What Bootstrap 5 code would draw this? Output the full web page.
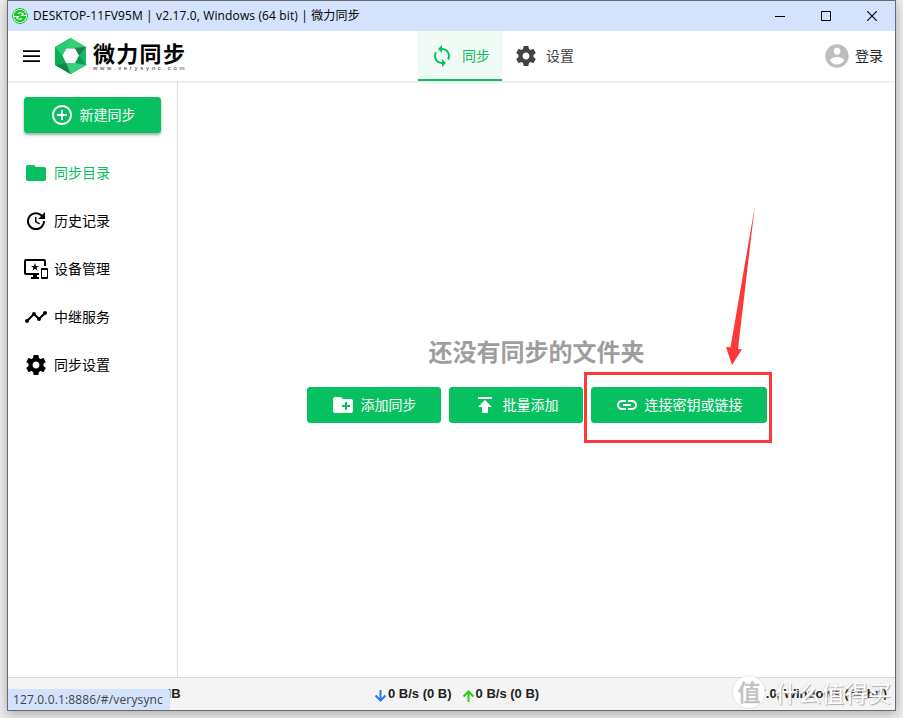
<!DOCTYPE html>
<html lang="zh-CN">
<head>
<meta charset="utf-8">
<meta name="viewport" content="width=device-width, initial-scale=1">
<title>微力同步</title>
<link href="https://cdn.jsdelivr.net/npm/bootstrap@5.3.0/dist/css/bootstrap.min.css" rel="stylesheet">
<style>
:root{--green:#07c160;--red:#fd3838}
body{width:903px;height:718px;overflow:hidden;background:#ececec;font-family:"Noto Sans","Noto Sans CJK SC",sans-serif;font-size:14px;line-height:20px;color:#000}
svg{display:block;flex:none;fill:currentColor}
.win{width:889px;height:711px;margin-left:7px;border:1px solid #696a70;background:#fff;box-shadow:0 3px 10px rgba(0,0,0,.28)}
.titlebar{height:30px;background:#d3e2fd;padding-left:4px;font-family:"Open Sans","Noto Sans CJK SC",sans-serif;font-size:12px}
.caption-text{margin-left:5px;white-space:nowrap;letter-spacing:.13px}
.win-ctl{width:46px;height:30px}
.topbar{height:50px;box-shadow:0 1px 2px rgba(0,0,0,.12);z-index:1}
.brand{width:410px}
.brand-mark{margin-left:3px;margin-right:7px}
.brand-name{font-family:"Noto Sans CJK SC",sans-serif;font-weight:700;font-size:22px;line-height:24px;height:24px;white-space:nowrap;letter-spacing:1.300px}
.brand-url{font-family:"Liberation Sans",sans-serif;font-size:6px;line-height:7px;letter-spacing:2.700px;color:#333;white-space:nowrap;margin-top:1px}
.tab-item{height:50px;width:84px;padding-left:12px;gap:8px;color:#424242}
.tab-item.active{color:var(--green);background:#f1fbf6;box-shadow:inset 0 -2px var(--green)}
.account{gap:4px;padding-right:12px}
.side{width:170px;border-right:1px solid #dfdfdf;padding:16px 16px 0}
.btn-sync{--bs-btn-bg:var(--green);--bs-btn-color:#fff;--bs-btn-border-color:var(--green);--bs-btn-hover-bg:#06ad56;--bs-btn-hover-color:#fff;--bs-btn-border-radius:3px;--bs-btn-font-size:14px;--bs-btn-line-height:20px;width:134px;height:36px;gap:6px;white-space:nowrap}
.btn-wide{width:176px}
.raised{box-shadow:0 2px 3px rgba(0,0,0,.35)}
.side-link{height:48px;gap:6px;color:#000}
.side-link.active{color:var(--green)}
.empty-title{font-family:"Noto Sans CJK SC",sans-serif;font-size:24px;line-height:32px;font-weight:700;color:#9e9e9e;margin-top:254px}
.actions{padding-top:20px}
.foot{height:33px;border-top:1px solid #d9d9d9;background:#f4f4f4;font-family:"Liberation Sans",sans-serif;font-size:13px;font-weight:700;line-height:16px;color:#222;padding:0 8px 0 9px}
.foot>div{white-space:nowrap}
.load{width:356px;letter-spacing:.15px}
.gap-up{margin-left:9px}
.url-tip{left:8px;top:689px;width:162px;height:21px;background:#d3e2fd;color:#444;font-family:"Open Sans",sans-serif;font-size:12px;line-height:21px;letter-spacing:.15px;padding-left:5px;white-space:nowrap;border-radius:0 2px 0 0}
.focus-box{left:584px;top:372px;width:188px;height:71px;border:3px solid var(--red)}
.pointer{left:700px;top:195px;color:var(--red)}
.stamp{left:733px;top:675px;height:33px}
.stamp-seal{width:32px;height:32px;background:#fff;font:700 23px/30px "Noto Sans CJK SC",sans-serif;color:#c4c4c4;text-align:center;box-shadow:0 0 2px #ccc}
.stamp-text{margin-left:10px;font:400 23px/30px "Noto Sans CJK SC",sans-serif;color:#fff;text-shadow:1px 1px 1px #aaa,-1px 0 1px #ddd;white-space:nowrap;letter-spacing:.3px}
</style>
</head>
<body class="position-relative">
<div class="win d-flex flex-column">
  <header class="titlebar d-flex align-items-center">
    <svg width="16" height="16" viewBox="0 0 16 16"><circle cx="8" cy="8" r="7.500" fill="#fff" stroke="#18c52c"/><circle cx="8" cy="8" r="6.200" fill="#18c52c"/><path d="M2 8.500h4.300L4.800 10c1 1.300 3.500 1.800 5.200.5M14 7.500H9.700L11.200 6C10.200 4.700 7.700 4.200 6 5.500" fill="none" stroke="#fff" stroke-width="1.200"/></svg>
    <span class="caption-text">DESKTOP-11FV95M | v2.17.0, Windows (64 bit) | 微力同步</span>
    <div class="d-flex ms-auto">
      <span class="win-ctl d-flex align-items-center justify-content-center"><svg width="10" height="10"><path d="M0 5h10v1H0z"/></svg></span>
      <span class="win-ctl d-flex align-items-center justify-content-center"><svg width="10" height="10"><path d="M.5.5h9v9h-9z" fill="none" stroke="#000"/></svg></span>
      <span class="win-ctl d-flex align-items-center justify-content-center"><svg width="10" height="10"><path d="M0 0l10 10M10 0L0 10" fill="none" stroke="#000" stroke-width="1.100"/></svg></span>
    </div>
  </header>
  <nav class="topbar d-flex align-items-center position-relative">
    <div class="brand d-flex align-items-center">
      <svg class="ms-1" width="40" height="24" viewBox="0 0 40 24" fill="#333"><path d="M11 6.200h17v1.900H11zM11 11.200h17v1.900H11zM11 16.200h17v1.900H11z"/></svg>
      <svg class="brand-mark" width="31" height="36" viewBox="0 0 31 36">
        <path fill="#0cab59" d="M15.500 0L31 9v18l-15.500 9L0 27V9z"/>
        <path fill="#35cf76" d="M15.500 0L31 9l-11 1.500h-9z"/><path fill="#14854c" d="M31 9l-7 8.500-4-7-8.500 0z"/>
        <path fill="#17b764" d="M31 9v18l-7-9.500z"/><path fill="#0b9d50" d="M31 27l-15.500 9 4.500-11 4-7.500z"/>
        <path fill="#38d17a" d="M31 27L15.500 36 11 25h9z"/><path fill="#118549" d="M15.500 36L0 27l11-2z"/>
        <path fill="#0baf58" d="M0 27V9l7.500 8.500L11 25z"/><path fill="#2acb72" d="M0 9L15.500 0l-4 10.500-4 7z"/>
        <path fill="#fff" d="M11.500 10.500h8.500l4 7-4 7.500h-9l-3.500-7.500z"/>
      </svg>
      <div><div class="brand-name">微力同步</div><div class="brand-url">www.verysync.com</div></div>
    </div>
    <a class="tab-item active d-flex align-items-center text-decoration-none"><svg width="24" height="24" viewBox="0 0 24 24"><path d="M12 4V1L8 5l4 4V6c3.310 0 6 2.690 6 6 0 1.010-.25 1.970-.7 2.800l1.460 1.460C19.540 15.030 20 13.570 20 12c0-4.420-3.580-8-8-8zm0 14c-3.310 0-6-2.690-6-6 0-1.010.25-1.970.7-2.800L5.240 7.740C4.460 8.970 4 10.430 4 12c0 4.420 3.580 8 8 8v3l4-4-4-4v3z"/></svg>同步</a>
    <a class="tab-item d-flex align-items-center text-decoration-none"><svg width="24" height="24" viewBox="0 0 24 24"><path id="gear" d="M19.430 12.980c.04-.32.07-.64.07-.98s-.03-.66-.07-.98l2.110-1.650c.19-.15.24-.42.12-.64l-2-3.460c-.12-.22-.39-.3-.61-.22l-2.490 1c-.52-.4-1.080-.73-1.690-.98l-.38-2.650C14.460 2.180 14.250 2 14 2h-4c-.25 0-.46.18-.49.42l-.38 2.650c-.61.25-1.170.59-1.690.98l-2.490-1c-.23-.09-.49 0-.61.22l-2 3.460c-.13.22-.07.49.12.64l2.110 1.650c-.04.32-.07.65-.07.98s.03.66.07.98l-2.110 1.650c-.19.15-.24.42-.12.64l2 3.460c.12.22.39.3.61.22l2.490-1c.52.4 1.080.73 1.690.98l.38 2.650c.03.24.24.42.49.42h4c.25 0 .46-.18.49-.42l.38-2.650c.61-.25 1.170-.59 1.690-.98l2.490 1c.23.09.49 0 .61-.22l2-3.460c.12-.22.07-.49-.12-.64l-2.110-1.650zM12 15.500c-1.930 0-3.500-1.570-3.500-3.500s1.570-3.500 3.500-3.500 3.500 1.570 3.500 3.500-1.570 3.500-3.500 3.500z"/></svg><span>设置</span></a>
    <a class="account d-flex align-items-center ms-auto text-decoration-none text-dark"><svg width="28" height="28" viewBox="0 0 24 24"><path fill="#bdbdbd" d="M12 2C6.480 2 2 6.480 2 12s4.480 10 10 10 10-4.480 10-10S17.520 2 12 2zm0 3c1.660 0 3 1.340 3 3s-1.340 3-3 3-3-1.340-3-3 1.340-3 3-3zm0 14.200c-2.500 0-4.710-1.280-6-3.220.03-1.990 4-3.080 6-3.080 1.990 0 5.970 1.090 6 3.080-1.290 1.940-3.500 3.220-6 3.220z"/></svg>登录</a>
  </nav>
  <div class="d-flex flex-grow-1">
    <aside class="side">
      <button class="btn btn-sync raised w-100 d-flex align-items-center justify-content-center p-0"><svg width="24" height="24" viewBox="0 0 24 24"><path d="M13 7h-2v4H7v2h4v4h2v-4h4v-2h-4V7zm-1-5C6.480 2 2 6.480 2 12s4.480 10 10 10 10-4.480 10-10S17.520 2 12 2zm0 18c-4.410 0-8-3.590-8-8s3.590-8 8-8 8 3.590 8 8-3.590 8-8 8z"/></svg><span>新建同步</span></button>
      <nav class="pt-3">
        <a class="side-link active d-flex align-items-center text-decoration-none"><svg width="24" height="24" viewBox="0 0 24 24"><path d="M10 4H4c-1.100 0-1.990.9-1.990 2L2 18c0 1.100.9 2 2 2h16c1.100 0 2-.9 2-2V8c0-1.100-.9-2-2-2h-8l-2-2z"/></svg>同步目录</a>
        <a class="side-link d-flex align-items-center text-decoration-none"><svg width="24" height="24" viewBox="0 0 24 24"><path d="M21 10.120h-6.780l2.740-2.820c-2.730-2.700-7.150-2.800-9.880-.1-2.730 2.710-2.730 7.080 0 9.790s7.150 2.710 9.880 0C18.320 15.650 19 14.080 19 12.100h2c0 1.980-.88 4.550-2.640 6.290-3.510 3.480-9.210 3.480-12.720 0-3.500-3.470-3.530-9.110-.02-12.580s9.140-3.470 12.650 0L21 3v7.120zM12.500 8v4.250l3.500 2.080-.72 1.210L11 13V8h1.500z"/></svg>历史记录</a>
        <a class="side-link d-flex align-items-center text-decoration-none"><svg width="24" height="24" viewBox="0 0 24 24"><path d="M23 11.010L18 11c-.55 0-1 .45-1 1v9c0 .55.45 1 1 1h5c.55 0 1-.45 1-1v-9c0-.55-.45-.99-1-.99zM23 20h-5v-7h5v7zM20 2H2C.89 2 0 2.890 0 4v12c0 1.100.89 2 2 2h7v2H7v2h8v-2h-2v-2h2v-2H2V4h18v5h2V4c0-1.110-.9-2-2-2zm-8.030 7L11 6l-.97 3H7l2.470 1.760-.94 2.910 2.470-1.800 2.470 1.800-.94-2.910L15 9h-3.030z"/></svg>设备管理</a>
        <a class="side-link d-flex align-items-center text-decoration-none"><svg width="24" height="24" viewBox="0 0 24 24"><path d="M23 8c0 1.100-.9 2-2 2-.18 0-.35-.02-.51-.07l-3.560 3.550c.05.16.07.34.07.52 0 1.100-.9 2-2 2s-2-.9-2-2c0-.18.02-.36.07-.52l-2.550-2.550c-.16.05-.34.07-.52.07s-.36-.02-.52-.07l-4.550 4.560c.05.16.07.33.07.51 0 1.100-.9 2-2 2s-2-.9-2-2 .9-2 2-2c.18 0 .35.02.51.07l4.560-4.550C8.020 9.360 8 9.180 8 9c0-1.100.9-2 2-2s2 .9 2 2c0 .18-.02.36-.07.52l2.550 2.550c.16-.05.34-.07.52-.07s.36.02.52.07l3.550-3.560C19.020 8.350 19 8.180 19 8c0-1.100.9-2 2-2s2 .9 2 2z"/></svg>中继服务</a>
        <a class="side-link d-flex align-items-center text-decoration-none"><svg width="24" height="24" viewBox="0 0 24 24"><use href="#gear"/></svg>同步设置</a>
      </nav>
    </aside>
    <main class="flex-grow-1 text-center">
      <h1 class="empty-title mb-0">还没有同步的文件夹</h1>
      <div class="actions d-flex justify-content-center gap-2">
        <button class="btn btn-sync d-flex align-items-center justify-content-center p-0"><svg width="24" height="24" viewBox="0 0 24 24"><path d="M20 6h-8l-2-2H4c-1.110 0-1.990.89-1.990 2L2 18c0 1.110.89 2 2 2h16c1.110 0 2-.89 2-2V8c0-1.110-.89-2-2-2zm-1 8h-3v3h-2v-3h-3v-2h3V9h2v3h3v2z"/></svg>添加同步</button>
        <button class="btn btn-sync d-flex align-items-center justify-content-center p-0"><svg width="24" height="24" viewBox="0 0 24 24"><path d="M5 4v2h14V4H5zm0 10h4v6h6v-6h4l-7-7-7 7z"/></svg>批量添加</button>
        <button class="btn btn-sync btn-wide d-flex align-items-center justify-content-center p-0"><svg width="24" height="24" viewBox="0 0 24 24"><path d="M3.900 12c0-1.710 1.390-3.100 3.100-3.100h4V7H7c-2.760 0-5 2.240-5 5s2.240 5 5 5h4v-1.900H7c-1.710 0-3.100-1.390-3.100-3.100zM8 13h8v-2H8v2zm9-6h-4v1.900h4c1.710 0 3.100 1.390 3.100 3.100s-1.390 3.100-3.100 3.100h-4V17h4c2.760 0 5-2.240 5-5s-2.240-5-5-5z"/></svg>连接密钥或链接</button>
      </div>
    </main>
  </div>
  <footer class="foot d-flex align-items-center">
    <div class="load">CPU: 0.00% ram: 34.34MB</div>
    <div class="d-flex align-items-center">
      <svg class="mt-1" width="15" height="12" viewBox="0 0 15 12"><path d="M7.500 0v10M2.500 5.500l5 5 5-5" fill="none" stroke="#2979ff" stroke-width="2"/></svg><span>0 B/s (0 B)</span>
      <svg class="mt-1 gap-up" width="15" height="12" viewBox="0 0 15 12"><path d="M7.500 12V2M2.500 6.500l5-5 5 5" fill="none" stroke="#27cf16" stroke-width="2"/></svg><span>0 B/s (0 B)</span>
    </div>
    <div class="ms-auto">v2.17.0, Windows (64 bit)</div>
  </footer>
</div>
<div class="url-tip position-absolute">127.0.0.1:8886/#/verysync</div>
<div class="focus-box position-absolute"></div>
<svg class="pointer position-absolute" width="80" height="180"><path d="M54.700 12L38 154l4 .3L32 170l-6-18 4.500.3z"/></svg>
<div class="stamp position-absolute d-flex align-items-center"><div class="stamp-seal rounded-circle">值</div><div class="stamp-text">什么值得买</div></div>
<script src="https://cdn.jsdelivr.net/npm/bootstrap@5.3.0/dist/js/bootstrap.bundle.min.js"></script>
</body>
</html>
